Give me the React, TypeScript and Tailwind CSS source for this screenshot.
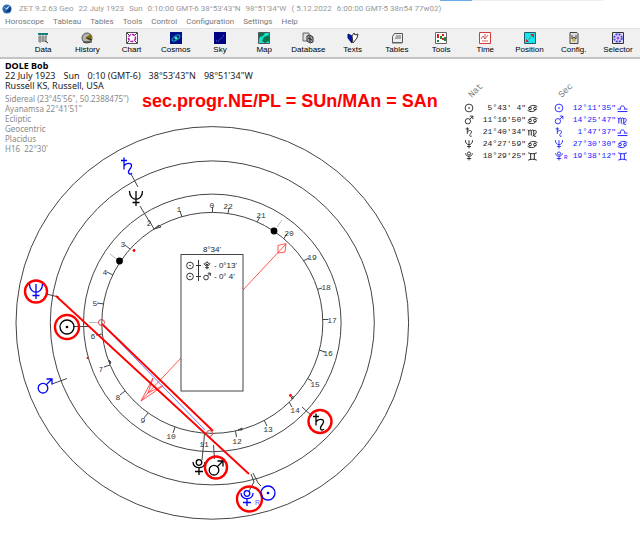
import type { ReactNode } from "react";

type GlyphName = "sun" | "mars" | "saturn" | "neptune" | "pluto";
type SignName = "cancer" | "virgo" | "libra" | "gemini";

const glyphs: Record<GlyphName, ReactNode> = {
  sun: (
    <>
      <circle r="7" />
      <circle r="0.7" fill="currentColor" />
    </>
  ),
  mars: (
    <>
      <circle cx="-2" cy="2.2" r="4.8" />
      <path d="M1.4-1.4 7-7M1.5-7H7v5.5" />
    </>
  ),
  saturn: <path d="M-6-5.5H0M-3-8.500V3.500M-3 0C-1-3.500 5-3.500 4.500 0 4 3 1 4 1.500 6.500 2 8.500 4 8.500 5 7" />,
  neptune: <path d="M-6.5-7C-6.5 4 6.5 4 6.5-7M0-7V8M-3.5 4.5h7" />,
  pluto: (
    <>
      <circle cy="-4.5" r="2.8" />
      <path d="M-6-5C-6 2.500 6 2.500 6-5M0 1V8M-4 4.5h8" />
    </>
  ),
};

const signs: Record<SignName, ReactNode> = {
  cancer: (
    <>
      <circle cx="-4" cy="0" r="2.2" />
      <circle cx="4" cy="0" r="2.2" />
      <path d="M-6-1C-3-6 3-6 8-3M6 1C3 6-3 6-8 3" />
    </>
  ),
  virgo: <path d="M-8-4l2 1V5M-6-2C-5-5-2-5-2-2V5M-2-2C-1-5 2-5 2-2V4C2 6 4 7 6 6M2-2C4-5 7-3 6 0 5 3 2 5 0 6" />,
  libra: <path d="M-8 5H8M-8 1H-3C-6-6 6-6 3 1H8" />,
  gemini: <path d="M-7-6C-3-4 3-4 7-6M-7 6C-3 4 3 4 7 6M-3-5V5M3-5V5" />,
};

function Mark({ shape, className }: { shape: ReactNode; className: string }) {
  return (
    <svg viewBox="-9 -9 18 18" className={className} fill="none" stroke="currentColor" strokeWidth="1.6" aria-hidden="true">
      {shape}
    </svg>
  );
}

const titleParts = [
  "ZET 9.2.63 Geo",
  "22 July 1923",
  "Sun",
  "0:10:00 GMT-6 38°53'43\"N",
  "98°51'34\"W",
  "( 5.12.2022",
  "6:00:00 GMT-5 38n54 77w02)",
];

const birthParts = ["22 July 1923", "Sun", "0:10 (GMT-6)", "38°53'43\"N", "98°51'34\"W"];

const menus = ["Horoscope", "Tableau", "Tables", "Tools", "Control", "Configuration", "Settings", "Help"];

const tools: { label: string; icon: ReactNode }[] = [
  {
    label: "Data",
    icon: (
      <>
        <path d="M1 1h10v2H1z" fill="#138080" />
        <path d="M1 5h9M1 7h8M1 9h8M3 3v8M6 3v7M9 3v7" stroke="#777" fill="none" />
        <path d="M8 9l3 2" stroke="#333" />
      </>
    ),
  },
  {
    label: "History",
    icon: (
      <>
        <circle cx="6" cy="6" r="5" fill="#b4b4b4" stroke="#555" />
        <path d="M4 6l6-4v7z" fill="#776d08" />
        <path d="M2 10h9M6 6l5 2" stroke="#222" />
      </>
    ),
  },
  {
    label: "Chart",
    icon: (
      <>
        <path d="M.5.5h11v11H.5z" fill="#fff" stroke="#555" />
        <circle cx="6" cy="6" r="3.5" fill="none" stroke="#b315b3" strokeWidth="1.5" strokeDasharray="3 1" />
        <path d="M1 1l2 2M11 1 9 3M1 11l2-2M11 11 9 9" stroke="#333" />
      </>
    ),
  },
  {
    label: "Cosmos",
    icon: (
      <>
        <path d="M0 0h12v12H0z" fill="#00108a" />
        <ellipse cx="6" cy="6" rx="4.5" ry="2" fill="none" stroke="#16afb8" transform="rotate(-35 6 6)" />
        <circle cx="6" cy="6" r="1.5" fill="#42efb8" />
      </>
    ),
  },
  {
    label: "Sky",
    icon: (
      <>
        <path d="M0 0h12v12H0z" fill="#000084" />
        <path d="M2 9l3 0 2-3 2-1 1-3" stroke="#5572cc" strokeDasharray="1 1" fill="none" />
      </>
    ),
  },
  {
    label: "Map",
    icon: (
      <>
        <path d="M.5.5h11v11H.5z" fill="#18e0cf" stroke="#555" />
        <path d="M1 1h6L5 4 2 5 1 7zM6 5l5-2v6l-4 2-3-2z" fill="#087748" />
      </>
    ),
  },
  {
    label: "Database",
    icon: (
      <>
        <path d="M1 1h6v8H1z" fill="#ddd" stroke="#666" />
        <path d="M5 4l3-1 3 2v5l-3 1-3-2z" fill="#aaa" stroke="#333" />
        <path d="M6 6l4 2M8 4v6" stroke="#222" />
      </>
    ),
  },
  {
    label: "Texts",
    icon: (
      <>
        <path d="M1 2l4 2v7L1 6z" fill="#0012b5" stroke="#001070" />
        <path d="M5 4l2-3 1 2 3-1-1 4-4 5z" fill="#fff" stroke="#333" />
      </>
    ),
  },
  {
    label: "Tables",
    icon: (
      <>
        <path d="M3.500 1.500h8v9h-10v-6z" fill="#eee" stroke="#555" />
        <path d="M5 4h5M4 6h6M1 11h10" stroke="#666" />
      </>
    ),
  },
  {
    label: "Tools",
    icon: (
      <>
        <path d="M.5.5h11v11H.5z" fill="#fff" stroke="#666" />
        <path d="M3 2v4M8 2v2M8 6v2" stroke="#e01b1b" strokeWidth="2" />
        <path d="M6 4v3M10 5v4M3 8v2" stroke="#168a32" strokeWidth="2" />
      </>
    ),
  },
  {
    label: "Time",
    icon: (
      <>
        <path d="M.5.5h11v11H.5z" fill="#fff" stroke="#d13b3b" />
        <path d="M2 7l2-3 2 3 3-4M3 9h6M6 2v5" stroke="#d86060" fill="none" />
      </>
    ),
  },
  {
    label: "Position",
    icon: (
      <>
        <path d="M.5.5h11v11H.5z" fill="#13e6ef" stroke="#235a65" />
        <path d="M3 9l6-6" stroke="#a05b32" strokeDasharray="2 1" />
        <path d="M6 2h4v4zM2 7l3 3H2z" fill="#dc2323" />
      </>
    ),
  },
  {
    label: "Config.",
    icon: (
      <>
        <path d="M2 .5h7l1 1v10H2z" fill="#ddd" stroke="#444" />
        <path d="M4 3v4l2-2 2 2V3" stroke="#444" fill="none" />
        <path d="M6 6v4M4 8h4" stroke="#b39b15" />
      </>
    ),
  },
  {
    label: "Selector",
    icon: (
      <>
        <path d="M.5.5h11v11H.5z" fill="#e4dcf5" stroke="#333" />
        <circle cx="6" cy="6" r="3.800" fill="none" stroke="#4a4fdd" strokeWidth="2" strokeDasharray="2 1" />
        <circle cx="6" cy="6" r="1.500" fill="#a24be0" />
      </>
    ),
  },
];

type Row = { planet: GlyphName; value: string; sign: SignName; retro?: boolean };

const natal: Row[] = [
  { planet: "sun", value: "5°43' 4\"", sign: "cancer" },
  { planet: "mars", value: "11°16'50\"", sign: "cancer" },
  { planet: "saturn", value: "21°40'34\"", sign: "virgo" },
  { planet: "neptune", value: "24°27'59\"", sign: "cancer" },
  { planet: "pluto", value: "18°29'25\"", sign: "gemini" },
];

const secondary: Row[] = [
  { planet: "sun", value: "12°11'35\"", sign: "libra" },
  { planet: "mars", value: "14°25'47\"", sign: "virgo" },
  { planet: "saturn", value: "1°47'37\"", sign: "libra" },
  { planet: "neptune", value: "27°30'30\"", sign: "cancer" },
  { planet: "pluto", value: "19°38'12\"", sign: "gemini", retro: true },
];

function Positions({ title, rows, color }: { title: string; rows: Row[]; color: string }) {
  return (
    <table className="w-[74px] table-fixed border-collapse font-['Liberation_Mono',monospace] text-[8px] leading-3">
      <caption className="h-[43px] text-left text-[9px] text-[#808080]">
        <span className="mt-[26px] ml-1 block w-4 -rotate-45">{title}</span>
      </caption>
      <tbody className={color}>
        {rows.map((r) => (
          <tr key={r.planet} className="h-3">
            <td className="w-4 p-0">
              <span className="flex items-center">
                <Mark shape={glyphs[r.planet]} className="size-[10px] shrink-0" />
                {r.retro && <span className="-mb-1 text-[6px] leading-none">R</span>}
              </span>
            </td>
            <td className="w-[46px] p-0 text-right whitespace-pre">{r.value}</td>
            <td className="p-0">
              <Mark shape={signs[r.sign]} className="ml-px size-[11px]" />
            </td>
          </tr>
        ))}
      </tbody>
    </table>
  );
}

/* Hour label, label centre, then tick start on the inner wheel and tick end. */
const hours: [string, number, number, number, number, number, number][] = [
  ["0", 212, 205, 212.5, 212, 212.5, 207],
  ["22", 228, 206, 228, 213.5, 229, 208],
  ["21", 261, 215, 257, 222, 260, 217],
  ["20", 289, 233, 283.5, 239, 287, 234],
  ["19", 312, 257, 303, 261, 309, 258],
  ["18", 326, 287, 317, 289.5, 322, 288],
  ["17", 332, 320, 323, 319.5, 328, 319.5],
  ["16", 328, 353, 319, 350, 325, 352],
  ["15", 315, 384, 307.5, 378.5, 312, 381],
  ["14", 295, 410, 289, 402, 292, 407],
  ["13", 268, 429, 264, 420, 267, 426],
  ["12", 237, 441, 235.5, 431, 236.5, 437],
  ["11", 204, 444, 204.5, 433, 204, 440],
  ["10", 171, 436, 175, 427, 173, 433],
  ["9", 143, 420, 148, 413, 144, 418],
  ["8", 118, 397, 125, 391, 120, 395],
  ["7", 101, 369, 110, 365, 104, 367],
  ["6", 93, 336, 102, 334, 96, 335],
  ["5", 95, 303, 104, 304, 97, 303],
  ["4", 105, 272, 113, 275, 107, 272],
  ["3", 123, 244, 130, 249, 125, 245],
  ["2", 149, 223, 154, 229, 149, 220],
  ["1", 179, 209, 182, 217, 180, 211],
];

const planets: { name: GlyphName; x: number; y: number; color: string; ring?: [number, number, number] }[] = [
  { name: "saturn", x: 127, y: 166, color: "text-[#0000ff]" },
  { name: "neptune", x: 136, y: 198, color: "text-black" },
  { name: "neptune", x: 36, y: 291, color: "text-[#0000ff]", ring: [36, 291.5, 11] },
  { name: "sun", x: 67, y: 327, color: "text-black", ring: [67, 327, 12] },
  { name: "mars", x: 45, y: 386, color: "text-[#0000ff]" },
  { name: "saturn", x: 319, y: 422, color: "text-black", ring: [320, 421.5, 11.5] },
  { name: "pluto", x: 199, y: 467, color: "text-black" },
  { name: "mars", x: 216, y: 468, color: "text-black", ring: [216, 467.5, 11] },
  { name: "pluto", x: 247, y: 498, color: "text-[#0000ff]", ring: [249.5, 499, 12.5] },
  { name: "sun", x: 268, y: 493, color: "text-[#0000ff]" },
];

function Wheel() {
  return (
    <svg viewBox="0 60 440 480" className="h-[480px] w-[440px]" fill="none" role="img" aria-label="Horoscope wheel">
      <g stroke="#444" strokeWidth="1">
        <circle cx="212.300" cy="322.900" r="196.300" />
        <circle cx="212.300" cy="322.900" r="162" />
        <circle cx="212.300" cy="322.900" r="128.800" />
        <circle cx="212.300" cy="322.900" r="110.500" />
        {hours.map(([label, , , x1, y1, x2, y2]) => (
          <line key={label} x1={x1} y1={y1} x2={x2} y2={y2} />
        ))}
        <path d="M131 174l7 13M140 206l9 15M46 294l13 3M73 326.500h16M52 384l15-5.500M204 440l-2 20M213.500 445l1 14M251 474l3 8-5 9M253 473l5 10 3 3M302 407l10 9" />
        <path d="M154 229l5-4 2 2zM109 360l1 4 1-2zM291 398l2 1v-3zM238 430l4-2v2z" />
      </g>
      <path d="M110 254l8 6M277 227l5-7M89 322.500h10" stroke="#bbb" />
      <g fill="#333" textAnchor="middle" className="font-['Liberation_Mono',monospace] text-[8px]">
        {hours.map(([label, x, y]) => (
          <text key={label} x={x} y={y + 3}>
            {label}
          </text>
        ))}
      </g>

      <path
        d="M181.500 357.500L148 393l5-15M148 393l15-7.500M141 401l12-23M141 401l22-15M141 401l7-8M243 290l43-46M278 245.500l8-2-1 8.500-7 1z"
        stroke="#ff4040"
        strokeWidth="0.900"
      />
      <rect x="181" y="254.500" width="62" height="136.500" fill="#fff" stroke="#444" />
      <g fill="#222" className="font-['Liberation_Sans',sans-serif] text-[8px]">
        <text x="212" y="252" textAnchor="middle">
          8°34'
        </text>
        <text x="214" y="268">
          - 0°13'
        </text>
        <text x="214" y="279">
          - 0° 4'
        </text>
      </g>
      <path d="M198.500 260v21M196 265.500h5M196 276.500h5" stroke="#333" />
      <g stroke="#222" strokeWidth="1.900" className="text-[#222]">
        <g transform="translate(190 265.500) scale(.48)">{glyphs.sun}</g>
        <g transform="translate(190 276.500) scale(.48)">{glyphs.sun}</g>
        <g transform="translate(207 265.500) scale(.48)">{glyphs.pluto}</g>
        <g transform="translate(207 276.500) scale(.48)">{glyphs.mars}</g>
      </g>

      <path d="M103 325l102 105" stroke="#6666ff" strokeWidth="0.900" />
      <path d="M56 296l193 178M102 324l111 107" stroke="#f00" strokeWidth="1.800" />
      <g stroke="#c44">
        <circle cx="101.500" cy="322.500" r="3" />
        <circle cx="209.500" cy="433.500" r="3" />
      </g>
      <g fill="#f00">
        <circle cx="134" cy="250.500" r="1.400" />
        <circle cx="290.500" cy="395.500" r="1.400" />
        <circle cx="87.500" cy="358" r="1" />
      </g>
      <g fill="#000">
        <circle cx="119.500" cy="261" r="3.400" />
        <circle cx="274" cy="231" r="3.400" />
      </g>

      {planets.map((p) => (
        <g key={`${p.name}-${p.x}`}>
          {p.ring && <circle cx={p.ring[0]} cy={p.ring[1]} r={p.ring[2]} stroke="#f00" strokeWidth="2.400" />}
          <g transform={`translate(${p.x} ${p.y})`} className={p.color} stroke="currentColor" strokeWidth="1.300">
            {glyphs[p.name]}
          </g>
        </g>
      ))}
      <text x="255" y="505" fill="#5555ff" className="font-['Liberation_Sans',sans-serif] text-[7px]">
        R
      </text>
    </svg>
  );
}

export default function App() {
  return (
    <div className="min-h-screen overflow-hidden bg-white font-['Roboto',sans-serif] whitespace-nowrap">
      <div className="flex h-px">
        <div className="w-[440px]" />
        <div className="w-8 bg-[#6eaee8]" />
        <div className="w-[131px] bg-[#eee]" />
      </div>
      <header className="flex h-[15px] items-center px-[2px] text-[8px] text-[#999]">
        <svg viewBox="0 0 12 12" className="mr-[7px] size-[10px]" aria-hidden="true">
          <circle cx="6" cy="6" r="5.500" fill="#2867b2" />
          <path d="M1 3l4 2 5-4-4 6z" fill="#cde6f8" />
          <path d="M4 10l7-7-1 6z" fill="#0c3479" />
        </svg>
        <h1 className="flex gap-[5px]">
          {titleParts.map((p) => (
            <span key={p}>{p}</span>
          ))}
        </h1>
      </header>
      <nav className="flex h-3 items-center gap-[9px] px-[5px] text-[8px] text-[#777]">
        {menus.map((m) => (
          <button key={m} type="button">
            {m}
          </button>
        ))}
      </nav>
      <div className="flex h-[31px] border-t border-b-2 border-t-[#e2e2e2] border-b-[#c4c4c4] bg-[#f0f0f0] pl-[21px]" role="toolbar">
        {tools.map((t) => (
          <button key={t.label} type="button" className="flex flex-1 basis-0 flex-col items-center pt-[3px]">
            <svg viewBox="0 0 12 12" className="size-3" aria-hidden="true">
              {t.icon}
            </svg>
            <span className="mt-px font-['Liberation_Sans',sans-serif] text-[8px] leading-[10px] text-black">
              {t.label}
            </span>
          </button>
        ))}
      </div>

      <main className="grid grid-cols-[440px_1fr]">
        <section className="col-start-1 row-start-1 pt-px">
          <Wheel />
        </section>
        <section className="z-10 col-start-1 row-start-1 pt-[2px] pl-[5px] font-['Noto_Sans',sans-serif]">
          <h2 className="text-[9px] leading-[10px] font-bold text-black">DOLE Bob</h2>
          <p className="flex gap-2 text-[9px] leading-[10px] text-[#222]">
            {birthParts.map((p) => (
              <span key={p}>{p}</span>
            ))}
          </p>
          <p className="text-[9px] leading-[10px] text-[#222]">Russell KS, Russell, USA</p>
          <div className="flex gap-1">
            <ul className="mt-[3px] w-[133px] text-[8px] leading-[10px] text-[#8a8a8a]">
              <li>Sidereal (23°45'56", 50.2388475")</li>
              <li>Ayanamsa 22°41'51"</li>
              <li>Ecliptic</li>
              <li>Geocentric</li>
              <li>Placidus</li>
              <li className="whitespace-pre">H16  22°30'</li>
            </ul>
            <strong className="font-['Liberation_Sans',sans-serif] text-[18px] leading-5 font-bold text-[#f00]">
              sec.progr.NE/PL = SUn/MAn = SAn
            </strong>
          </div>
        </section>
        <aside className="col-start-2 row-start-1 flex items-start gap-4 pl-6">
          <Positions title="Nat" rows={natal} color="text-[#222]" />
          <Positions title="Sec" rows={secondary} color="text-[#2020ff]" />
        </aside>
      </main>
    </div>
  );
}
